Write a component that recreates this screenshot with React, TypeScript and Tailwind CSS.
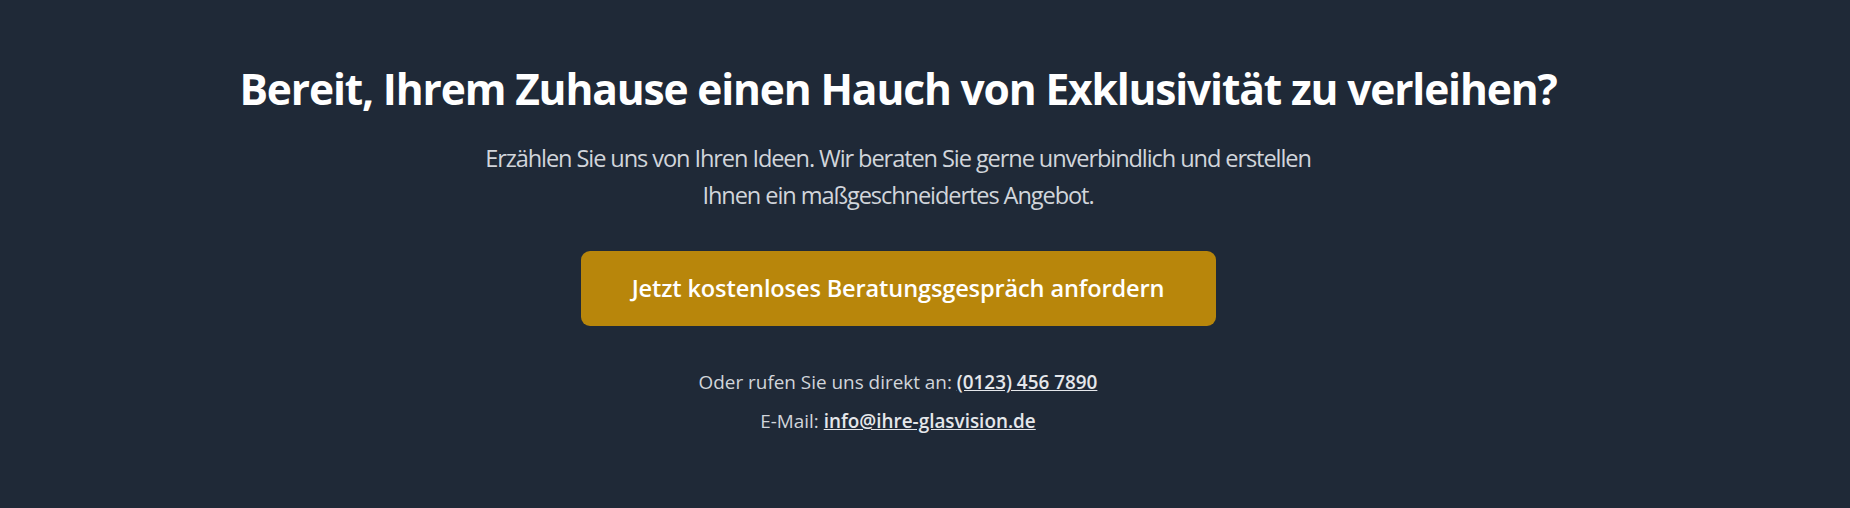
import React from "react";

const App = () => {
    return (
        <section className="min-h-screen bg-[#1f2937] font-['Open_Sans',sans-serif]">
            <div className="flex flex-col items-center pr-[54px] pt-[65px] text-center">
                <h2 className="text-[42.5px] font-bold leading-[47px] tracking-[-1.15px] text-white">
                    Bereit, Ihrem Zuhause einen Hauch von Exklusivität zu verleihen?
                </h2>
                <p className="mt-[28px] max-w-[870px] text-[23.6px] leading-[37px] tracking-[-1.1px] text-[#d1d5db]">
                    Erzählen Sie uns von Ihren Ideen. Wir beraten Sie gerne unverbindlich und erstellen Ihnen ein maßgeschneidertes Angebot.
                </p>
                <a
                    href="#kontakt"
                    className="mt-[37px] flex h-[75px] w-[635px] items-center justify-center rounded-[9px] bg-[#b8860b] text-[23.6px] font-semibold leading-[33px] tracking-[-0.15px] text-white"
                >
                    Jetzt kostenloses Beratungsgespräch anfordern
                </a>
                <div className="mt-[42px] text-[18.9px] leading-[28px] text-[#d1d5db]">
                    <p>
                        Oder rufen Sie uns direkt an:{" "}
                        <a href="tel:01234567890" className="font-semibold text-[#e5e7eb] underline">(0123) 456 7890</a>
                    </p>
                    <p className="mt-[11px]">
                        E-Mail:{" "}
                        <a href="mailto:info@ihre-glasvision.de" className="font-semibold text-[#e5e7eb] underline">info@ihre-glasvision.de</a>
                    </p>
                </div>
            </div>
        </section>
    );
};

export default App;
